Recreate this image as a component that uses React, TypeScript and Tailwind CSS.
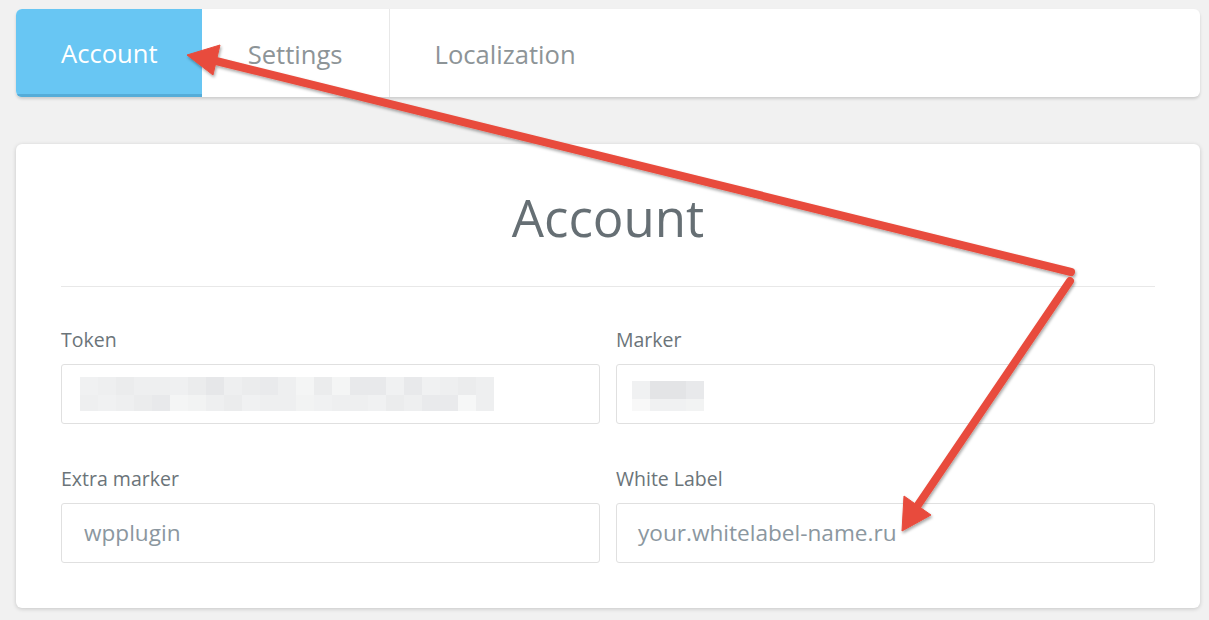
import React from 'react';

const tokenRows: string[][] = [
    ['#f0f1f2', '#eeeff0', '#ebeced', '#eeeff0', '#eeeff0', '#eff0f1', '#ebeced', '#e6e7e9', '#eeeff0', '#ebeced', '#e9eaec', '#eeeff0', '#f4f5f5', '#ebeced', '#f4f5f5', '#e8e9eb', '#e8e9eb', '#f0f1f2', '#e8e9eb', '#f0f1f2', '#eeeff0', '#ebeced', '#eeeff0'],
    ['#eeeff0', '#f0f1f2', '#eeeff0', '#ebeced', '#e8e9eb', '#f4f5f5', '#f2f3f3', '#eeeff0', '#ebeced', '#f0f1f2', '#eeeff0', '#eeeff0', '#f2f3f3', '#f0f1f2', '#eeeff0', '#eeeff0', '#f0f1f2', '#ebeced', '#eeeff0', '#e9eaec', '#e9eaec', '#f6f7f7', '#eeeff0'],
];

const markerRows: string[][] = [
    ['#f0f1f2', '#e3e4e6', '#e3e4e6', '#e8e9eb'],
    ['#f8f8f8', '#f0f1f2', '#f0f1f2', '#f2f3f3'],
];

// pixelated (blurred) secret value
const Pixels = ({ rows, heights }: { rows: string[][]; heights: string[] }) => (
    <div className="flex flex-col">
        {rows.map((row, r) => (
            <div key={r} className={`flex ${heights[r]}`}>
                {row.map((c, i) => (
                    <div key={i} className="w-[18px] h-full" style={{ backgroundColor: c }} />
                ))}
            </div>
        ))}
    </div>
);

const Field: React.FC<{ label: string; children: React.ReactNode }> = ({ label, children }) => (
    <div className="flex flex-col">
        <label className="text-[19.5px] leading-[28px] text-[#6b7479] mb-[10px]">{label}</label>
        <div className="h-[60px] border border-[#e0e0e0] rounded-[3px] flex items-center text-[22.6px] text-[#8b97a0]">
            {children}
        </div>
    </div>
);

const Arrows = () => (
    <svg className="absolute inset-0 pointer-events-none" width="1209" height="620" viewBox="0 0 1209 620">
        <defs>
            <filter id="sh" x="-10%" y="-10%" width="120%" height="120%">
                <feDropShadow dx="1" dy="2" stdDeviation="1.5" floodColor="#000" floodOpacity="0.35" />
            </filter>
        </defs>
        <g filter="url(#sh)" fill="#e84c3d" stroke="#e84c3d">
            <line x1="1071" y1="272" x2="212" y2="60" strokeWidth="8" strokeLinecap="round" />
            <polygon points="187,55 220,45 213,75" strokeWidth="1" strokeLinejoin="round" />
            <line x1="1070" y1="281" x2="916" y2="508" strokeWidth="8" strokeLinecap="round" />
            <polygon points="902,531 904,496 931,515" strokeWidth="1" strokeLinejoin="round" />
        </g>
    </svg>
);

export default function App() {
    return (
        <div className="relative w-[1209px] h-[620px] overflow-hidden bg-[#f1f1f1] pl-[16px] pr-[9px] pt-[9px]" style={{ fontFamily: '"Open Sans", "Noto Sans", sans-serif' }}>
            {/* Tabs */}
            <div className="flex h-[88px] bg-white rounded-[6px] shadow-[0_2px_3px_rgba(0,0,0,0.15)] overflow-hidden text-[25.6px]">
                <div className="flex items-center pl-[45px] pr-[44px] bg-[#68c6f3] border-b-[3px] border-[#55acd8] text-white pt-[6px]">
                    Account
                </div>
                <div className="flex items-center px-[46px] text-[#8d9497] border-r border-[#e8e8e8] pt-[4px]">
                    Settings
                </div>
                <div className="flex items-center px-[45px] text-[#8d9497] pt-[4px]">
                    Localization
                </div>
            </div>

            {/* Account card */}
            <div className="mt-[47px] bg-white rounded-[6px] shadow-[0_1px_4px_rgba(0,0,0,0.18)] px-[45px] pt-[43px] pb-[45px]">
                <h1 className="text-center text-[51px] leading-[60px] text-[#666f74]">Account</h1>
                <div className="mt-[39px] border-t border-[#e8e8e8]" />
                <div className="mt-[39px] grid grid-cols-2 gap-x-[16px] gap-y-[41px]">
                    <Field label="Token">
                        <div className="pl-[18px]">
                            <Pixels rows={tokenRows} heights={['h-[18px]', 'h-[16px]']} />
                        </div>
                    </Field>
                    <Field label="Marker">
                        <div className="pl-[15px] pt-[3px]">
                            <Pixels rows={markerRows} heights={['h-[18px]', 'h-[12px]']} />
                        </div>
                    </Field>
                    <Field label="Extra marker">
                        <span className="pl-[22px]">wpplugin</span>
                    </Field>
                    <Field label="White Label">
                        <span className="pl-[21px]">your.whitelabel-name.ru</span>
                    </Field>
                </div>
            </div>

            <Arrows />
        </div>
    );
}
